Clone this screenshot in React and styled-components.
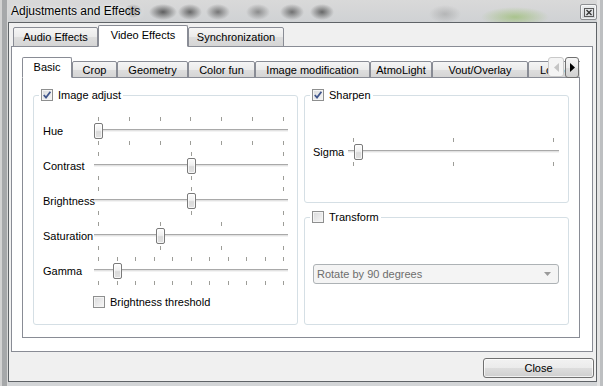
import React from "react";
import styled, { createGlobalStyle } from "styled-components";

const GlobalStyle = createGlobalStyle`
  html, body {
    margin: 0;
    padding: 0;
  }
  body {
    font-family: "Liberation Sans", Arial, sans-serif;
    font-size: 11px;
    color: #000;
    background: #cfd1d3;
  }
  * {
    box-sizing: border-box;
  }
`;

const outerTabs = [
  { label: "Audio Effects", w: 85 },
  { label: "Video Effects", w: 90, active: true },
  { label: "Synchronization", w: 96 },
];

const subTabs = [
  { label: "Basic", w: 50, active: true },
  { label: "Crop", w: 45 },
  { label: "Geometry", w: 71 },
  { label: "Color fun", w: 67 },
  { label: "Image modification", w: 115 },
  { label: "AtmoLight", w: 62 },
  { label: "Vout/Overlay", w: 96 },
  { label: "Logo", w: 80, clipped: true },
];

const sliders = [
  { label: "Hue", top: 7, bottom: 7, value: 0 },
  { label: "Contrast", top: 3, bottom: 3, value: 0.5 },
  { label: "Brightness", top: 3, bottom: 3, value: 0.5 },
  { label: "Saturation", top: 4, bottom: 4, value: 1 / 3 },
  { label: "Gamma", top: 11, bottom: 11, value: 0.1 },
];

const App = () => {
  return (
    <>
      <GlobalStyle />
      <Window>
        <TitleBar>
          <Title>Adjustments and Effects</Title>
          <CloseX>
            <svg width="10" height="9" viewBox="0 0 10 9">
              <rect x="0.5" y="0.5" width="9" height="8" fill="none" stroke="#5a5a5a" />
              <path d="M2.5 2 L7.5 7 M7.5 2 L2.5 7" stroke="#333" strokeWidth="1.3" />
            </svg>
          </CloseX>
        </TitleBar>

        <Client>
          <TabBar $h={22} $indent={2}>
            {outerTabs.map((t) => (
              <Tab key={t.label} $w={t.w} $h={20} $lift={2} $active={t.active}>
                {t.label}
              </Tab>
            ))}
          </TabBar>

          <OuterPane>
            <TabBar $h={21} $indent={0}>
              {subTabs.map((t) => (
                <Tab
                  key={t.label}
                  $w={t.w}
                  $h={17}
                  $lift={4}
                  $active={t.active}
                  $clipped={t.clipped}
                >
                  {t.label}
                </Tab>
              ))}
              <ScrollArrows>
                <ArrowButton $disabled>
                  <svg width="5" height="9" viewBox="0 0 5 9">
                    <path d="M5 0 L0 4.5 L5 9 Z" fill="#c4c4c4" />
                  </svg>
                </ArrowButton>
                <ArrowButton>
                  <svg width="5" height="9" viewBox="0 0 5 9">
                    <path d="M0 0 L5 4.5 L0 9 Z" fill="#000" />
                  </svg>
                </ArrowButton>
              </ScrollArrows>
            </TabBar>

            <SubPane>
              <GroupGrid>
                <Group>
                  <Legend>
                    <CheckBox checked />
                    Image adjust
                  </Legend>
                  <AdjustBody>
                    {sliders.map((s) => (
                      <SliderRow key={s.label}>
                        <SliderLabel $w={51}>{s.label}</SliderLabel>
                        <Slider width={194} pad={4} top={s.top} bottom={s.bottom} value={s.value} />
                      </SliderRow>
                    ))}
                    <ThresholdRow>
                      <CheckBox />
                      Brightness threshold
                    </ThresholdRow>
                  </AdjustBody>
                </Group>

                <RightColumn>
                  <Group>
                    <Legend>
                      <CheckBox checked />
                      Sharpen
                    </Legend>
                    <CenteredBody>
                      <SliderRow>
                        <SliderLabel $w={35}>Sigma</SliderLabel>
                        <Slider width={211} pad={5} top={3} bottom={3} value={0.025} />
                      </SliderRow>
                    </CenteredBody>
                  </Group>

                  <Group>
                    <Legend>
                      <CheckBox />
                      Transform
                    </Legend>
                    <CenteredBody>
                      <Combo>
                        Rotate by 90 degrees
                        <svg width="7" height="4" viewBox="0 0 7 4">
                          <path d="M0 0 L7 0 L3.5 4 Z" fill="#9a9a9a" />
                        </svg>
                      </Combo>
                    </CenteredBody>
                  </Group>
                </RightColumn>
              </GroupGrid>
            </SubPane>
          </OuterPane>

          <Footer>
            <Button>Close</Button>
          </Footer>
        </Client>
      </Window>
    </>
  );
};

const CheckBox = ({ checked }) => (
  <Box>
    {checked && (
      <svg width="10" height="10" viewBox="0 0 10 10">
        <polyline points="1.8,5 4,7.6 8.4,1.8" fill="none" stroke="#41568c" strokeWidth="1.8" />
      </svg>
    )}
  </Box>
);

const Slider = ({ width, pad, top, bottom, value }) => {
  const span = width - pad * 2 - 1;
  return (
    <SliderBox $w={width}>
      <TickRow $pad={pad}>
        {Array.from({ length: top }, (_, i) => (
          <Tick key={i} />
        ))}
      </TickRow>
      <Track>
        <Groove />
        <Handle $left={pad - 4 + value * span} />
      </Track>
      <TickRow $pad={pad}>
        {Array.from({ length: bottom }, (_, i) => (
          <Tick key={i} />
        ))}
      </TickRow>
    </SliderBox>
  );
};

const Window = styled.div`
  width: 603px;
  height: 386px;
  display: flex;
  flex-direction: column;
  overflow: hidden;
  background:
    linear-gradient(to right, #d2d2d2 0 2px, #a6a8aa 2px 7px, #d9d9d9 7px 8px, transparent 8px),
    linear-gradient(to left, #bdbfc1 0 3px, #e3e3e3 3px 6px, transparent 6px),
    radial-gradient(ellipse 9px 7px at 133px 11px, rgba(40, 40, 40, 0.55), transparent),
    radial-gradient(ellipse 14px 8px at 163px 12px, rgba(30, 30, 30, 0.65), transparent),
    radial-gradient(ellipse 12px 8px at 190px 12px, rgba(30, 30, 30, 0.6), transparent),
    radial-gradient(ellipse 12px 8px at 218px 12px, rgba(40, 40, 40, 0.55), transparent),
    radial-gradient(ellipse 12px 8px at 258px 12px, rgba(50, 50, 50, 0.45), transparent),
    radial-gradient(ellipse 12px 8px at 292px 12px, rgba(30, 30, 30, 0.55), transparent),
    radial-gradient(ellipse 12px 8px at 322px 12px, rgba(30, 30, 30, 0.6), transparent),
    radial-gradient(ellipse 16px 9px at 445px 14px, rgba(90, 90, 90, 0.25), transparent),
    radial-gradient(ellipse 34px 10px at 515px 17px, rgba(130, 180, 70, 0.5), transparent),
    linear-gradient(#d9d9d9, #cccfd2 30px, #d3d5d7);
`;

const TitleBar = styled.div`
  height: 22px;
  flex-shrink: 0;
  display: flex;
  justify-content: space-between;
  align-items: flex-start;
  padding: 0 6px 0 11px;
`;

const Title = styled.div`
  font-size: 12px;
  line-height: 22px;
  color: #000;
  text-shadow: 0 0 6px rgba(255, 255, 255, 0.9), 0 0 2px rgba(255, 255, 255, 0.8);
`;

const CloseX = styled.div`
  margin-top: 4px;
  width: 17px;
  height: 16px;
  display: flex;
  align-items: center;
  justify-content: center;
  border: 1px solid #8d8f92;
  border-radius: 2px;
  background: linear-gradient(#eceeef, #d2d5d8);
  box-shadow: inset 0 0 0 1px rgba(255, 255, 255, 0.6);
`;

const Client = styled.div`
  flex: 1;
  margin: 0 6px 4px 8px;
  display: flex;
  flex-direction: column;
  padding: 2px 2px 3px 2px;
  border: 1px solid #5f6367;
  background: #f0f0f0;
`;

const TabBar = styled.div`
  position: relative;
  height: ${(p) => p.$h}px;
  flex-shrink: 0;
  display: flex;
  align-items: flex-end;
  padding-left: ${(p) => p.$indent}px;
  margin-bottom: -1px;
  overflow: hidden;
`;

const Tab = styled.div`
  position: relative;
  flex-shrink: 0;
  width: ${(p) => p.$w}px;
  height: ${(p) => (p.$active ? p.$h + p.$lift : p.$h)}px;
  display: flex;
  align-items: center;
  justify-content: ${(p) => (p.$clipped ? "flex-start" : "center")};
  padding: 0 0 ${(p) => (p.$active ? 2 : 0)}px ${(p) => (p.$clipped ? 11 : 0)}px;
  border: 1px solid #898c95;
  border-radius: 2px 2px 0 0;
  white-space: nowrap;
  overflow: hidden;
  background: ${(p) =>
    p.$active ? "#fff" : "linear-gradient(#f5f5f5, #ebebeb 50%, #dedede 51%, #d5d5d5)"};
  border-bottom-color: ${(p) => (p.$active ? "#fff" : "#898c95")};
  z-index: ${(p) => (p.$active ? 1 : 0)};
`;

const ScrollArrows = styled.div`
  position: absolute;
  right: 0;
  top: 0;
  display: flex;
  z-index: 2;
`;

const ArrowButton = styled.div`
  width: ${(p) => (p.$disabled ? 16 : 14)}px;
  height: ${(p) => (p.$disabled ? 20 : 21)}px;
  margin-right: 1px;
  display: flex;
  align-items: center;
  justify-content: center;
  border: 1px solid ${(p) => (p.$disabled ? "#c9c9c9" : "#707070")};
  border-radius: 3px;
  background: ${(p) =>
    p.$disabled ? "#f4f4f4" : "linear-gradient(#f6f6f6, #ebebeb 50%, #dddddd 51%, #d0d0d0)"};
`;

const OuterPane = styled.div`
  flex: 1;
  display: flex;
  flex-direction: column;
  margin-right: 1px;
  padding: 10px 12px 13px 10px;
  border: 1px solid #898c95;
  background: #fff;
`;

const SubPane = styled.div`
  flex: 1;
  padding: 11px 10px 12px 10px;
  border: 1px solid #898c95;
  background: #fff;
`;

const GroupGrid = styled.div`
  height: 100%;
  display: grid;
  grid-template-columns: 265px 265px;
  column-gap: 6px;
`;

const RightColumn = styled.div`
  display: flex;
  flex-direction: column;
  gap: 8px;
`;

const Group = styled.fieldset`
  flex: 1;
  min-width: 0;
  margin: 0;
  padding: 0;
  display: flex;
  flex-direction: column;
  border: 1px solid #d5dfe5;
  border-radius: 3px;
`;

const Legend = styled.legend`
  display: flex;
  align-items: center;
  gap: 5px;
  height: 12px;
  margin-left: 5px;
  padding: 0 2px 0 2px;
  line-height: 12px;
  white-space: nowrap;
`;

const Box = styled.span`
  width: 12px;
  height: 12px;
  flex-shrink: 0;
  display: flex;
  align-items: center;
  justify-content: center;
  border: 1px solid #8e8f8f;
  background: linear-gradient(135deg, #d9dadb, #f7f7f7);
  box-shadow: inset 0 0 0 1px #f4f4f4;
`;

const AdjustBody = styled.div`
  display: flex;
  flex-direction: column;
  gap: 7px;
  padding: 16px 0 0 9px;
`;

const CenteredBody = styled.div`
  flex: 1;
  display: flex;
  align-items: center;
  padding-left: 8px;
  padding-right: 9px;
`;

const SliderRow = styled.div`
  display: flex;
  align-items: center;
`;

const SliderLabel = styled.div`
  width: ${(p) => p.$w}px;
  flex-shrink: 0;
  white-space: nowrap;
`;

const SliderBox = styled.div`
  width: ${(p) => p.$w}px;
  display: flex;
  flex-direction: column;
  gap: 2px;
`;

const TickRow = styled.div`
  height: 4px;
  display: flex;
  justify-content: space-between;
  padding: 0 ${(p) => p.$pad}px;
`;

const Tick = styled.span`
  width: 1px;
  height: 4px;
  background: #9d9d98;
`;

const Track = styled.div`
  position: relative;
  height: 16px;
`;

const Groove = styled.div`
  position: absolute;
  left: 0;
  right: 0;
  top: 6px;
  height: 3px;
  border-top: 1px solid #a9a9a9;
  border-bottom: 1px solid #f3f3f3;
  background: #e2e2e2;
`;

const Handle = styled.div`
  position: absolute;
  top: 0;
  left: ${(p) => p.$left}px;
  width: 9px;
  height: 16px;
  border: 1px solid #7a7a7a;
  border-radius: 2px;
  background: linear-gradient(#fdfdfd, #f0f0f0 45%, #dadada 55%, #e2e2e2);
  box-shadow: inset 0 0 0 1px rgba(255, 255, 255, 0.7);
`;

const ThresholdRow = styled.div`
  display: flex;
  align-items: center;
  gap: 5px;
  height: 12px;
  margin: 4px 0 0 50px;
  white-space: nowrap;
`;

const Combo = styled.div`
  width: 246px;
  height: 20px;
  display: flex;
  align-items: center;
  justify-content: space-between;
  padding: 0 7px 0 3px;
  border: 1px solid #adb2b5;
  border-radius: 3px;
  background: #f4f4f4;
  color: #6d6d6d;
  white-space: nowrap;
`;

const Footer = styled.div`
  display: flex;
  justify-content: flex-end;
  margin-top: 6px;
`;

const Button = styled.div`
  width: 111px;
  height: 20px;
  display: flex;
  align-items: center;
  justify-content: center;
  border: 1px solid #707070;
  border-radius: 3px;
  background: linear-gradient(#f2f2f2, #ebebeb 50%, #dddddd 51%, #cfcfcf);
  box-shadow: inset 0 0 0 1px rgba(255, 255, 255, 0.7);
`;

export default App;
